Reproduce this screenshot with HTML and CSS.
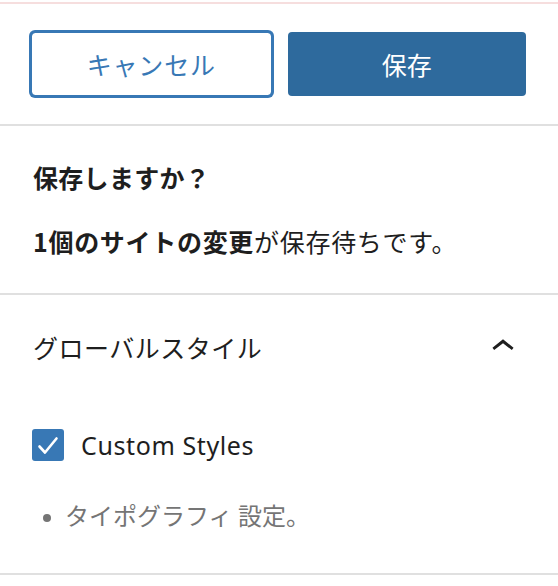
FILE: index.html
```html
<!DOCTYPE html>
<html lang="ja">
<head>
<meta charset="utf-8">
<link rel="stylesheet" href="styles.css">
</head>
<body>
<div class="topline"></div>
<div class="actions">
  <button class="btn btn-secondary">キャンセル</button>
  <button class="btn btn-primary">保存</button>
</div>
<div class="section summary">
  <h2 class="title">保存しますか？</h2>
  <p class="desc"><strong>1個のサイトの変更</strong>が保存待ちです。</p>
</div>
<div class="section panel">
  <div class="panel-header">
    <span class="panel-title">グローバルスタイル</span>
    <svg class="chevron" viewBox="0 0 24 24" width="46" height="46"><path d="M6.5 12.4L12 8l5.5 4.4-.9 1.2L12 10l-4.6 3.6-.9-1.2z"/></svg>
  </div>
  <label class="check-row">
    <span class="checkbox">
      <svg viewBox="0 0 32 32" width="32" height="32"><path d="M7.5 17.5l5.5 6 11.5-14" fill="none" stroke="#fff" stroke-width="2.6" stroke-linecap="round" stroke-linejoin="round"/></svg>
    </span>
    <span class="check-label">Custom Styles</span>
  </label>
  <ul class="changes">
    <li>タイポグラフィ 設定。</li>
  </ul>
</div>
</body>
</html>
```
FILE: styles.css
```css
html, body {
  margin: 0;
  padding: 0;
  background: #fff;
}
body {
  font-family: "Noto Sans", "Noto Sans CJK JP", sans-serif;
  color: #1e1e1e;
  width: 558px;
}
.topline {
  margin-top: 2px;
  height: 2px;
  background: #f6dede;
}
.actions {
  display: flex;
  gap: 16px;
  padding: 28px 32px 28px 31px;
  border-bottom: 2px solid #e0e0e0;
}
.btn {
  flex: 1;
  height: 64px;
  border-radius: 4px;
  font-family: "Noto Sans CJK JP", sans-serif;
  font-size: 25px;
  cursor: pointer;
  box-sizing: border-box;
}
.btn-secondary {
  background: #fff;
  color: #3878b5;
  border: 1px solid #3878b5;
  outline: 2px solid #3878b5;
  outline-offset: -1px;
  box-shadow: 0 0 0 2px #3878b5;
  border-radius: 4px;
  letter-spacing: 0.8px;
}
.btn-primary {
  background: #2e6a9d;
  color: #fff;
  border: none;
}
.section {
  border-bottom: 2px solid #e0e0e0;
}
.summary {
  padding: 32px 32px 33px 33px;
  font-family: "Noto Sans CJK JP", sans-serif;
}
.title {
  margin: 0;
  font-size: 25px;
  font-weight: 700;
  line-height: 38px;
  letter-spacing: 0.3px;
}
.desc {
  margin: 26px 0 0;
  font-size: 25px;
  line-height: 38px;
  letter-spacing: 0.7px;
}
.desc strong {
  font-weight: 700;
}
.panel {
  padding: 29px 0 39px;
}
.panel-header {
  display: flex;
  align-items: center;
  justify-content: space-between;
  padding: 0 32px 0 33px;
  height: 46px;
}
.panel-title {
  font-family: "Noto Sans CJK JP", sans-serif;
  font-size: 25px;
  line-height: 46px;
  letter-spacing: 0.5px;
}
.chevron {
  fill: #1e1e1e;
  display: block;
}
.check-row {
  display: flex;
  align-items: center;
  gap: 17px;
  margin: 59px 0 0 32px;
  height: 32px;
}
.checkbox {
  width: 32px;
  height: 32px;
  background: #3878b5;
  border-radius: 3px;
  display: block;
}
.checkbox svg {
  display: block;
}
.check-label {
  font-size: 25px;
  line-height: 32px;
  letter-spacing: 0.6px;
}
.changes {
  margin: 35px 0 0;
  padding: 0 0 0 65px;
  color: #757575;
  font-family: "Noto Sans CJK JP", sans-serif;
  font-size: 24px;
  line-height: 38px;
}
.changes li::marker {
  font-size: 20px;
}
```
